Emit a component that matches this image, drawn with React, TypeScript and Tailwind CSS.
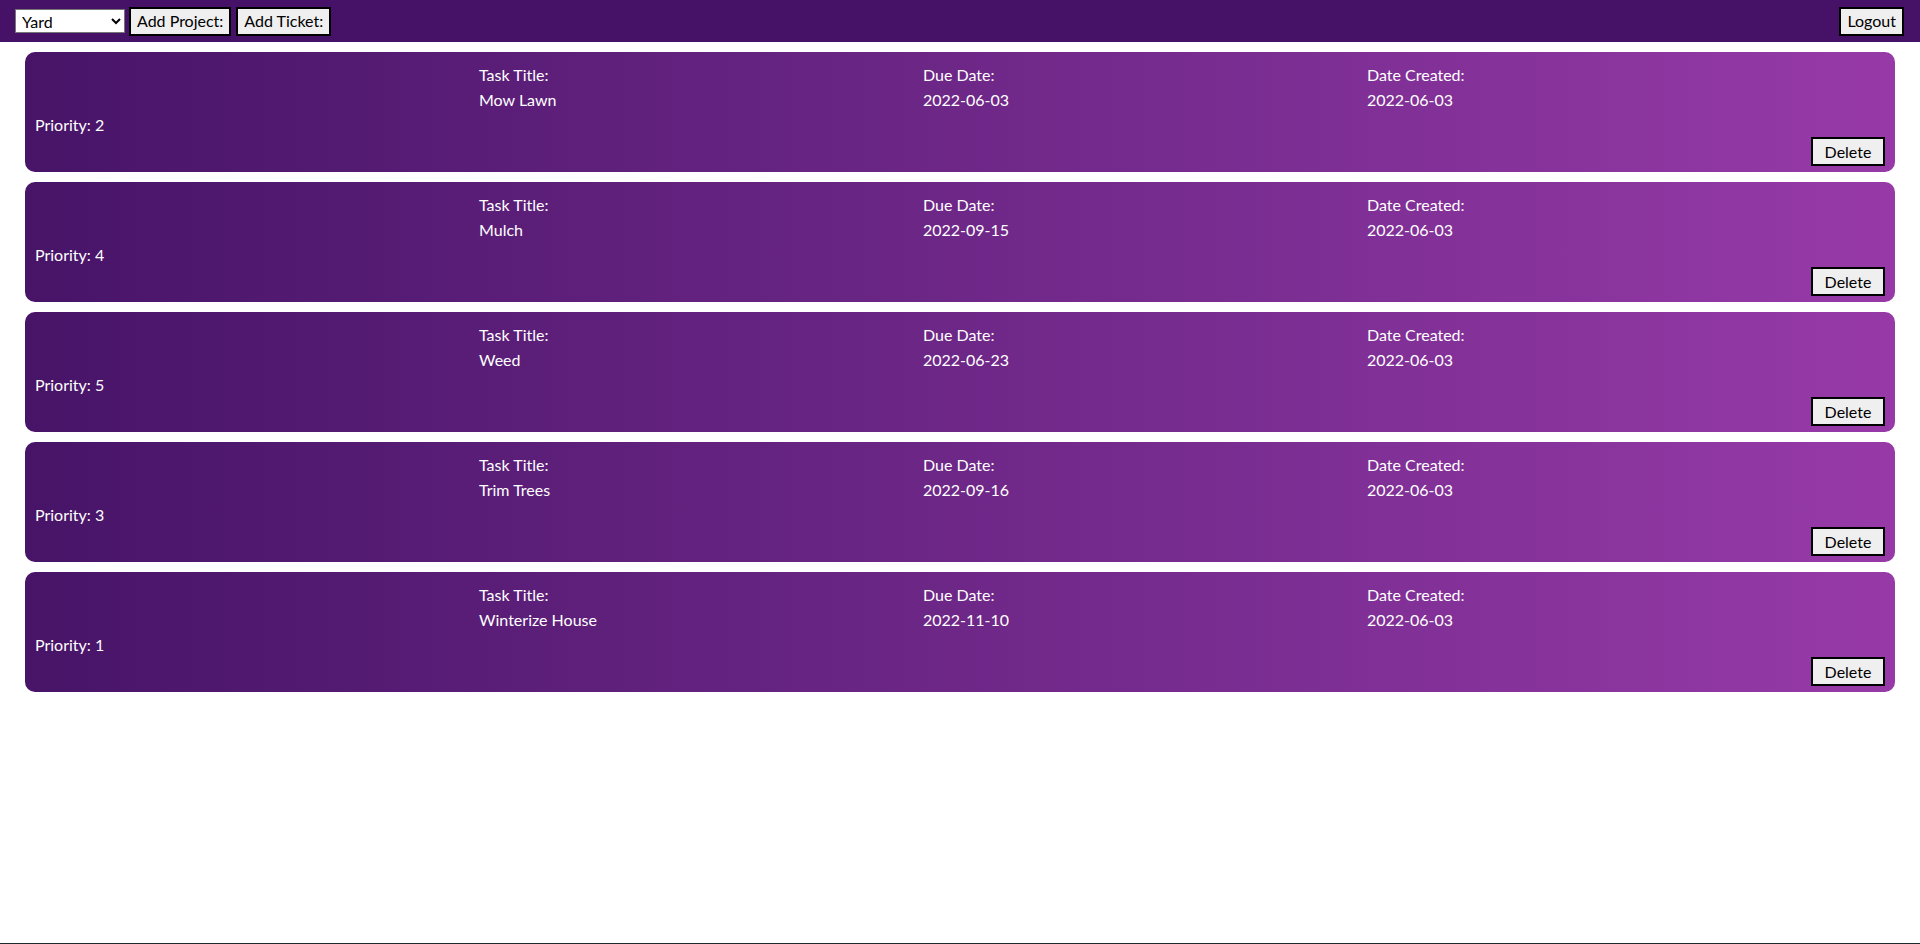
import React from 'react';

interface Ticket {
  title: string;
  due: string;
  created: string;
  priority: number;
}

const tickets: Ticket[] = [
  { title: 'Mow Lawn', due: '2022-06-03', created: '2022-06-03', priority: 2 },
  { title: 'Mulch', due: '2022-09-15', created: '2022-06-03', priority: 4 },
  { title: 'Weed', due: '2022-06-23', created: '2022-06-03', priority: 5 },
  { title: 'Trim Trees', due: '2022-09-16', created: '2022-06-03', priority: 3 },
  { title: 'Winterize House', due: '2022-11-10', created: '2022-06-03', priority: 1 },
];

const btn =
  'h-[29px] px-[6px] border-2 border-black bg-[#efefef] text-black text-[16px] leading-none';

const TicketCard: React.FC<{ ticket: Ticket }> = ({ ticket }) => (
  <div className="rounded-[10px] bg-gradient-to-r from-[#471468] to-[#973aa8] pt-[10px] pb-[6px] px-[10px] text-white text-[16px] leading-[25px]">
    <div className="grid grid-cols-[444px_444px_444px_1fr]">
      <div />
      <div>
        <div>Task Title:</div>
        <div>{ticket.title}</div>
      </div>
      <div>
        <div>Due Date:</div>
        <div>{ticket.due}</div>
      </div>
      <div>
        <div>Date Created:</div>
        <div>{ticket.created}</div>
      </div>
    </div>
    <div>Priority: {ticket.priority}</div>
    <div className="flex justify-end">
      <button className={`${btn} w-[74px]`}>Delete</button>
    </div>
  </div>
);

export default function App() {
  return (
    <div
      className="min-h-screen flex flex-col bg-white"
      style={{ fontFamily: "Lato, 'Noto Sans', sans-serif" }}
    >
      <nav className="h-[42px] bg-[#461268] flex items-center pl-[15px] pr-[16px]">
        <select
          defaultValue="Yard"
          className="w-[110px] h-[24px] bg-white border border-[#767676] text-black text-[16px] pl-[2px]"
        >
          <option>Yard</option>
          <option>House</option>
        </select>
        <button className={`${btn} ml-[4px]`}>Add Project:</button>
        <button className={`${btn} ml-[5px]`}>Add Ticket:</button>
        <button className={`${btn} ml-auto`}>Logout</button>
      </nav>
      <main className="flex-1 flex flex-col gap-[10px] px-[25px] pt-[10px]">
        {tickets.map((t) => (
          <TicketCard key={t.title} ticket={t} />
        ))}
      </main>
      <div className="h-px bg-[#1f2a30]" />
    </div>
  );
}
